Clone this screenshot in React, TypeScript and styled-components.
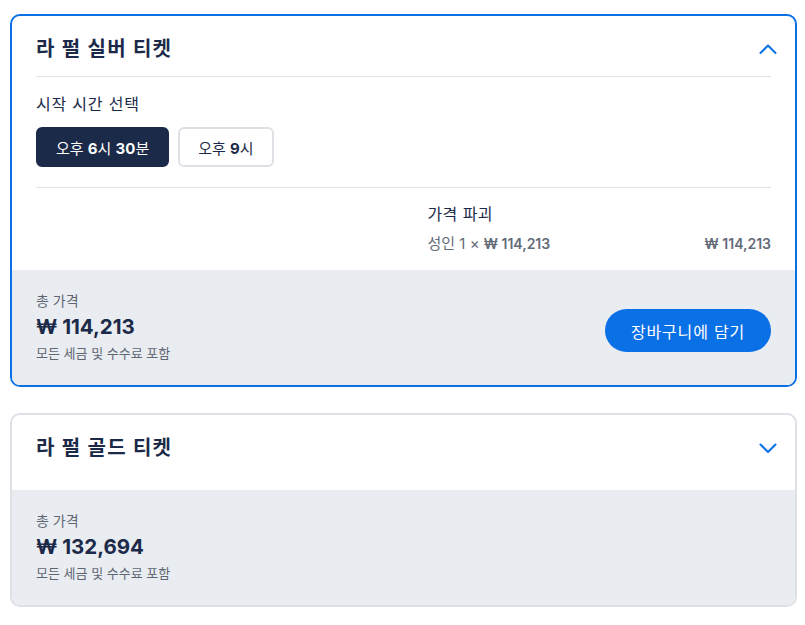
import React from "react";
import styled, { createGlobalStyle } from "styled-components";

const Global = createGlobalStyle`
  html, body { margin: 0; padding: 0; background: #ffffff; }
  body { font-family: Inter, "Noto Sans CJK KR", "Noto Sans", sans-serif; color: #1b2a48; }
  * { box-sizing: border-box; }
`;

const Page = styled.div`
  display: flex;
  flex-direction: column;
  gap: 26px;
  padding: 14px 8px 0 10px;
`;

const Card = styled.section<{ $active?: boolean }>`
  border: 2px solid ${(p) => (p.$active ? "#0a70e6" : "#dde1e6")};
  border-radius: 10px;
  overflow: hidden;
  background: #fff;
`;

const Body = styled.div`
  padding: 0 24px;
`;

const Header = styled.div<{ $open?: boolean }>`
  display: flex;
  align-items: center;
  justify-content: space-between;
  padding: ${(p) => (p.$open ? "20px 0 14px" : "20px 24px 29px")};
  ${(p) => (p.$open ? "border-bottom: 1px solid #dfe2e6;" : "")}
`;

const Title = styled.h2`
  margin: 0;
  font-size: 20px;
  line-height: 26px;
  font-weight: 700;
  color: #1b2a48;
  letter-spacing: 1.3px;
`;

const Chevron = styled.svg`
  width: 18px;
  height: 18px;
  margin-right: -6px;
  flex: none;
`;

const Label = styled.div`
  margin-top: 15px;
  font-size: 16px;
  line-height: 24px;
  letter-spacing: 0.8px;
  color: #1b2a48;
`;

const Times = styled.div`
  display: flex;
  gap: 9px;
  margin-top: 11px;
  padding-bottom: 20px;
  border-bottom: 1px solid #dfe2e6;
`;

const TimeButton = styled.button<{ $selected?: boolean }>`
  height: 40px;
  padding: 0 18px;
  border-radius: 6px;
  border: 2px solid ${(p) => (p.$selected ? "#1b2a48" : "#dde1e6")};
  background: ${(p) => (p.$selected ? "#1b2a48" : "#ffffff")};
  color: ${(p) => (p.$selected ? "#ffffff" : "#1b2a48")};
  font-family: inherit;
  font-size: 15px;
  font-weight: 400;
  cursor: pointer;
  b { font-weight: 700; }
`;

const Breakdown = styled.div`
  display: grid;
  grid-template-columns: 1fr 1fr;
  column-gap: 48px;
  padding: 14px 0 14px;
`;

const BreakdownCol = styled.div`
  grid-column: 2;
  display: flex;
  flex-direction: column;
  gap: 6px;
`;

const BreakdownTitle = styled.div`
  font-size: 16px;
  line-height: 24px;
  letter-spacing: 0.4px;
  color: #1b2a48;
`;

const LineItem = styled.div`
  display: flex;
  justify-content: space-between;
  align-items: baseline;
  font-size: 15px;
  line-height: 24px;
  color: #646b78;
  b { font-weight: 600; font-size: 14px; }
`;

const Footer = styled.div`
  background: #e9ecf0;
  display: flex;
  align-items: center;
  justify-content: space-between;
  padding: 22px 24px 23px;
`;

const Totals = styled.div`
  display: flex;
  flex-direction: column;
  gap: 3px;
`;

const TotalLabel = styled.div`
  font-size: 14px;
  line-height: 18px;
  color: #5f6673;
`;

const TotalPrice = styled.div`
  font-size: 20.5px;
  line-height: 28px;
  font-weight: 700;
  color: #1b2a48;
`;

const Note = styled.div`
  font-size: 13px;
  line-height: 18px;
  color: #5f6673;
`;

const CartButton = styled.button`
  height: 43px;
  margin-top: 7px;
  padding: 0 26px;
  border: none;
  border-radius: 22px;
  background: #0a70e6;
  color: #ffffff;
  font-family: inherit;
  font-size: 16px;
  letter-spacing: 0.8px;
  cursor: pointer;
`;

const ChevronIcon = ({ up }: { up?: boolean }) => (
  <Chevron viewBox="0 0 18 18" fill="none">
    <path
      d={up ? "M1.5 13 L9 5.5 L16.5 13" : "M1.5 5.5 L9 13 L16.5 5.5"}
      stroke="#0a70e6"
      strokeWidth="2"
      strokeLinecap="round"
      strokeLinejoin="round"
    />
  </Chevron>
);

export default function App() {
  return (
    <>
      <Global />
      <Page>
        <Card $active>
          <Body>
            <Header $open>
              <Title>라 펄 실버 티켓</Title>
              <ChevronIcon up />
            </Header>
            <Label>시작 시간 선택</Label>
            <Times>
              <TimeButton $selected>
                오후 <b>6</b>시 <b>30</b>분
              </TimeButton>
              <TimeButton>
                오후 <b>9</b>시
              </TimeButton>
            </Times>
            <Breakdown>
              <BreakdownCol>
                <BreakdownTitle>가격 파괴</BreakdownTitle>
                <LineItem>
                  <span>
                    성인 1 × <b>₩ 114,213</b>
                  </span>
                  <b>₩ 114,213</b>
                </LineItem>
              </BreakdownCol>
            </Breakdown>
          </Body>
          <Footer>
            <Totals>
              <TotalLabel>총 가격</TotalLabel>
              <TotalPrice>₩ 114,213</TotalPrice>
              <Note>모든 세금 및 수수료 포함</Note>
            </Totals>
            <CartButton>장바구니에 담기</CartButton>
          </Footer>
        </Card>
        <Card>
          <Header>
            <Title>라 펄 골드 티켓</Title>
            <ChevronIcon />
          </Header>
          <Footer>
            <Totals>
              <TotalLabel>총 가격</TotalLabel>
              <TotalPrice>₩ 132,694</TotalPrice>
              <Note>모든 세금 및 수수료 포함</Note>
            </Totals>
          </Footer>
        </Card>
      </Page>
    </>
  );
}
